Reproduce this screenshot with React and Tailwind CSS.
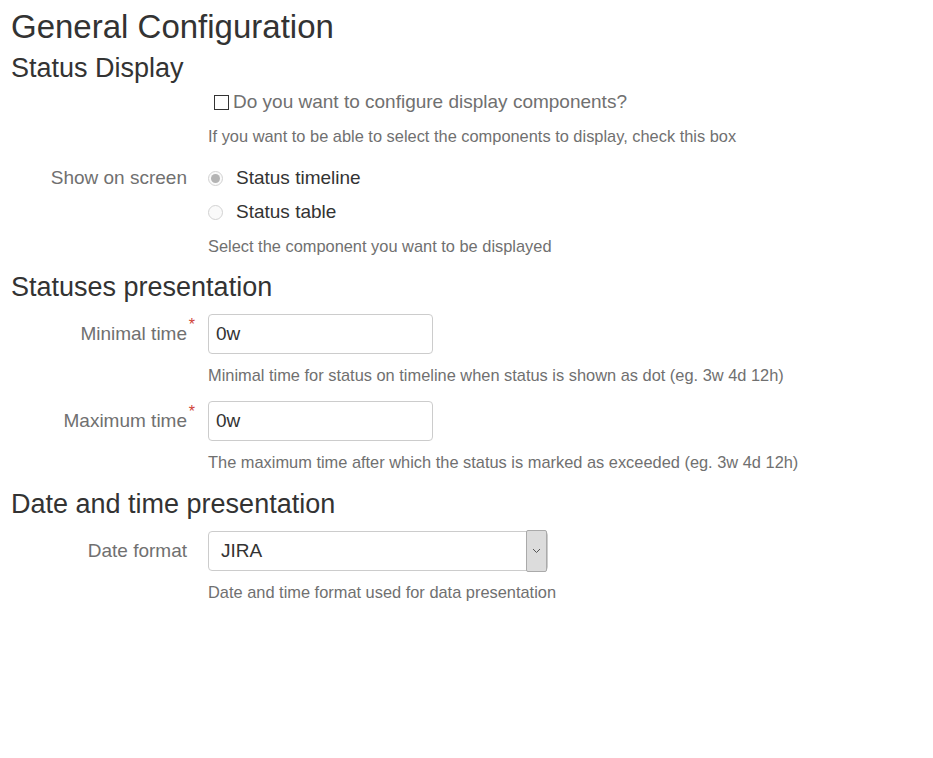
import { useState } from 'react';

function Label({ children, required }) {
  return (
    <div className="text-right text-[19px] leading-[24px] text-[#707070]">
      <span className="relative">
        {children}
        {required && (
          <span className="absolute -right-[8px] -top-[6px] text-[16px] leading-[16px] text-[#d04437]">*</span>
        )}
      </span>
    </div>
  );
}

function Help({ children, className = '' }) {
  return (
    <div className={`ml-[208px] text-[16.4px] leading-[20px] text-[#707070] ${className}`}>{children}</div>
  );
}

function Radio({ checked }) {
  return (
    <span className="flex h-[15px] w-[15px] items-center justify-center rounded-full border border-[#d2d2d2] bg-[#fafafa]">
      {checked && <span className="h-[9px] w-[9px] rounded-full bg-[#b4b4b4]" />}
    </span>
  );
}

export default function App() {
  const [minTime, setMinTime] = useState('0w');
  const [maxTime, setMaxTime] = useState('0w');
  const [configure, setConfigure] = useState(false);

  return (
    <div className="min-h-screen bg-white text-[#333] font-['Liberation_Sans',Arial,sans-serif]">
      <h1 className="pl-[11px] pt-[7px] text-[33px] leading-[40px]">General Configuration</h1>

      {/* Status Display */}
      <h2 className="mt-[4px] pl-[11px] text-[27px] leading-[34px]">Status Display</h2>
      <label className="mt-[5px] ml-[208px] flex h-[24px] items-center text-[19px] text-[#707070]">
        <span
          onClick={() => setConfigure(!configure)}
          className="ml-[6px] flex h-[15px] w-[15px] items-center justify-center border border-[#333] bg-white text-[11px] leading-none text-[#333]"
        >
          {configure ? '✓' : ''}
        </span>
        <span className="ml-[4px] leading-[24px]">Do you want to configure display components?</span>
      </label>
      <Help className="mt-[12px]">If you want to be able to select the components to display, check this box</Help>

      <div className="mt-[20px] grid grid-cols-[187px_1fr] gap-x-[21px]">
        <Label>Show on screen</Label>
        <div className="flex flex-col gap-[10px]">
          <div className="flex h-[24px] items-center text-[19px]">
            <Radio checked />
            <span className="ml-[13px]">Status timeline</span>
          </div>
          <div className="flex h-[24px] items-center text-[19px]">
            <Radio />
            <span className="ml-[13px]">Status table</span>
          </div>
        </div>
      </div>
      <Help className="mt-[12px]">Select the component you want to be displayed</Help>

      {/* Statuses presentation */}
      <h2 className="mt-[14px] pl-[11px] text-[27px] leading-[34px]">Statuses presentation</h2>
      <div className="mt-[10px] grid grid-cols-[187px_1fr] items-center gap-x-[21px]">
        <Label required>Minimal time</Label>
        <input
          value={minTime}
          onChange={(e) => setMinTime(e.target.value)}
          className="h-[40px] w-[225px] rounded-[4px] border border-[#ccc] bg-white pl-[7px] text-[19px] text-[#333] outline-none"
        />
      </div>
      <Help className="mt-[11px]">Minimal time for status on timeline when status is shown as dot (eg. 3w 4d 12h)</Help>

      <div className="mt-[16px] grid grid-cols-[187px_1fr] items-center gap-x-[21px]">
        <Label required>Maximum time</Label>
        <input
          value={maxTime}
          onChange={(e) => setMaxTime(e.target.value)}
          className="h-[40px] w-[225px] rounded-[4px] border border-[#ccc] bg-white pl-[7px] text-[19px] text-[#333] outline-none"
        />
      </div>
      <Help className="mt-[11px]">The maximum time after which the status is marked as exceeded (eg. 3w 4d 12h)</Help>

      {/* Date and time presentation */}
      <h2 className="mt-[15px] pl-[11px] text-[27px] leading-[34px]">Date and time presentation</h2>
      <div className="mt-[10px] grid grid-cols-[187px_1fr] items-center gap-x-[21px]">
        <Label>Date format</Label>
        <div className="flex h-[40px] w-[340px] items-stretch rounded-[4px] border border-[#ccc] bg-white">
          <select className="flex-1 appearance-none bg-transparent pl-[12px] text-[19px] text-[#333] outline-none">
            <option>JIRA</option>
          </select>
          <div className="-my-[2px] flex w-[21px] items-center justify-center rounded-[2px] border border-[#aaa] bg-[#dcdcdc]">
            <svg width="9" height="6" viewBox="0 0 9 6" fill="none">
              <path d="M1 1l3.5 3.5L8 1" stroke="#555" strokeWidth="1" />
            </svg>
          </div>
        </div>
      </div>
      <Help className="mt-[11px]">Date and time format used for data presentation</Help>
    </div>
  );
}
